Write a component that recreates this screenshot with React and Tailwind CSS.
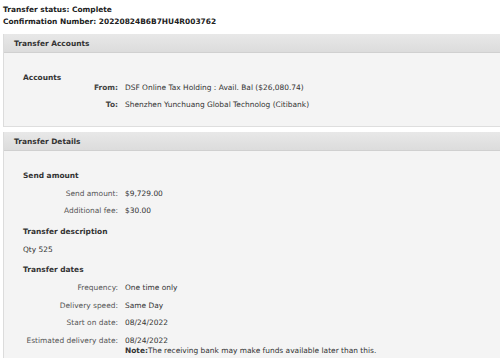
export default function App() {
  const Row = ({ label, children, className = "" }) => (
    <div className={"flex items-start leading-[12px] " + className}>
      <div className="w-[114px] shrink-0 text-right text-[#555]">{label}</div>
      <div className="pl-[7px] text-[#333]">{children}</div>
    </div>
  );
  return (
    <div className="w-[500px] h-[358px] overflow-hidden bg-white font-['DejaVu_Sans',Verdana,sans-serif] text-[7.45px] text-[#333]">
      <div className="pl-[3px] pt-[4px] font-bold text-[#222] leading-[12px]">
        <div>Transfer status: Complete</div>
        <div>Confirmation Number: 20220824B6B7HU4R003762</div>
      </div>

      <div className="ml-[3px] mt-[6px] border-l border-[#dcdcdc]">
        <div className="h-[19px] flex items-center pt-[2px] pl-[10px] font-bold text-[#333] bg-gradient-to-b from-[#e8e8e8] to-[#dcdcdc] border-b border-[#d0d0d0]">
          Transfer Accounts
        </div>
        <div className="bg-[#f4f4f4] h-[74px] border-b border-[#dedede] pt-[19px]">
          <div className="pl-[19px] font-bold leading-[12px]">Accounts</div>
          <Row label={<span className="font-bold text-[#444]">From:</span>} className="mt-[-2px]">
            DSF Online Tax Holding : Avail. Bal ($26,080.74)
          </Row>
          <Row label={<span className="font-bold text-[#444]">To:</span>} className="mt-[5px]">
            Shenzhen Yunchuang Global Technolog (Citibank)
          </Row>
        </div>
      </div>

      <div className="ml-[3px] mt-[5px] border-l border-[#dcdcdc]">
        <div className="h-[19px] flex items-center pt-[2px] pl-[10px] font-bold text-[#333] bg-gradient-to-b from-[#e8e8e8] to-[#dcdcdc] border-b border-[#d0d0d0]">
          Transfer Details
        </div>
        <div className="bg-[#f4f4f4] h-[220px] pt-[19px]">
          <div className="pl-[19px] font-bold leading-[12px]">Send amount</div>
          <Row label="Send amount:" className="mt-[6px]">$9,729.00</Row>
          <Row label="Additional fee:" className="mt-[5px]">$30.00</Row>
          <div className="pl-[19px] font-bold leading-[12px] mt-[9px]">Transfer description</div>
          <div className="pl-[19px] leading-[12px] mt-[6px]">Qty 525</div>
          <div className="pl-[19px] font-bold leading-[12px] mt-[8px]">Transfer dates</div>
          <Row label="Frequency:" className="mt-[6px]">One time only</Row>
          <Row label="Delivery speed:" className="mt-[6px]">Same Day</Row>
          <Row label="Start on date:" className="mt-[5px]">08/24/2022</Row>
          <div className="flex items-start leading-[10px] mt-[7px]">
            <div className="w-[114px] shrink-0 text-right text-[#555]">Estimated delivery date:</div>
            <div className="pl-[7px] text-[#333]">
              <div>08/24/2022</div>
              <div><span className="font-bold">Note:</span>The receiving bank may make funds available later than this.</div>
            </div>
          </div>
        </div>
      </div>
    </div>
  );
}
